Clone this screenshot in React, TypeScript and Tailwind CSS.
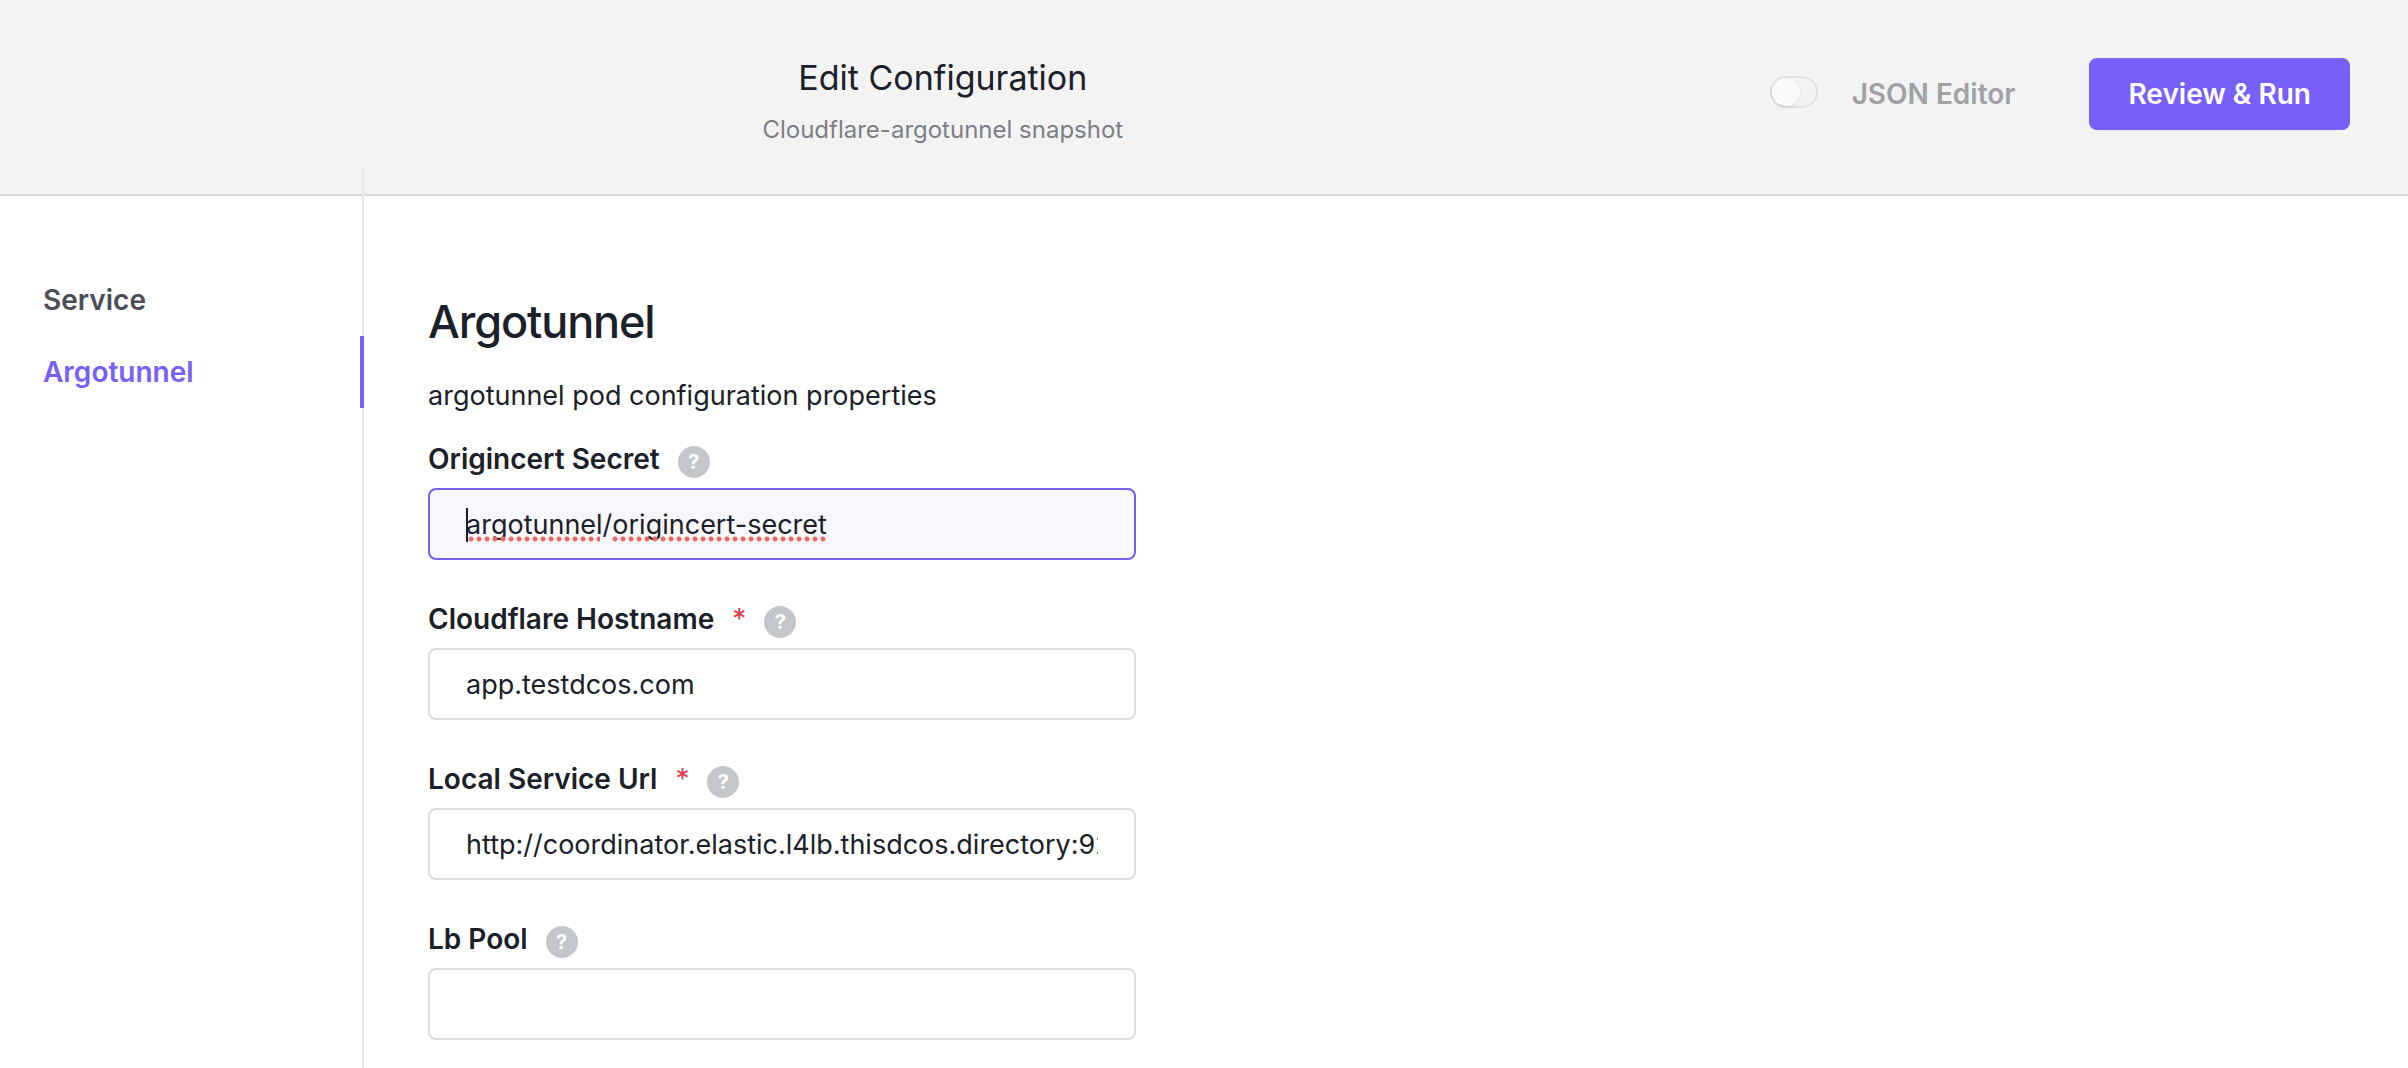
import React from "react";

type Field = {
  id: string;
  label: string;
  value: string;
  required?: boolean;
  active?: boolean;
};

const fields: Field[] = [
  { id: "origincert-secret", label: "Origincert Secret", value: "argotunnel/origincert-secret", active: true },
  { id: "cloudflare-hostname", label: "Cloudflare Hostname", value: "app.testdcos.com", required: true },
  {
    id: "local-service-url",
    label: "Local Service Url",
    value: "http://coordinator.elastic.l4lb.thisdcos.directory:9200",
    required: true,
  },
  { id: "lb-pool", label: "Lb Pool", value: "" },
];

function SpellingMark({ className }: { className: string }) {
  return (
    <span
      className={`absolute top-12 h-1.5 bg-[radial-gradient(circle_at_3px_3px,#ee6a60_0,#ee6a60_2px,transparent_3px)] bg-[length:8px_6px] ${className}`}
    />
  );
}

function FieldRow({ field }: { field: Field }) {
  return (
    <div className="mb-10">
      <div className="flex h-12 items-start">
        <label htmlFor={field.id} className="text-[28px] leading-[38px] font-semibold whitespace-nowrap">
          {field.label}
          {field.required && <span className="ml-[18px] font-normal text-[#dd3c4a]">*</span>}
        </label>
        <button
          type="button"
          aria-label={`Help for ${field.label}`}
          className="mt-1.5 ml-[18px] flex size-8 items-center justify-center rounded-full bg-[#c4c7ca] text-xl leading-8 font-bold text-white"
        >
          ?
        </button>
      </div>
      <div className="relative">
        <input
          id={field.id}
          type="text"
          spellCheck={false}
          defaultValue={field.value}
          className={`block h-[72px] w-full rounded-lg border-2 px-9 text-[27px] outline-none ${
            field.active ? "border-[#7460f6] bg-[#f8f7fd]" : "border-[#dadde2] bg-white"
          }`}
        />
        {field.active && (
          <span aria-hidden="true" className="pointer-events-none">
            <span className="absolute top-5 left-[38px] h-[34px] w-0.5 bg-[#1b2029]" />
            <SpellingMark className="left-10 w-[132px]" />
            <SpellingMark className="left-[184px] w-[216px]" />
          </span>
        )}
      </div>
    </div>
  );
}

export default function App() {
  return (
    <div className="flex h-screen flex-col overflow-hidden bg-white font-[Inter,'Liberation_Sans',sans-serif] text-[#1b2029]">
      <header className="flex h-[196px] shrink-0 items-start border-b-2 border-[#dadada] bg-[#f3f3f3] pr-[58px] pl-[116px]">
        <div className="flex-1 pt-14 text-center">
          <h1 className="text-[34px] leading-11 font-normal">Edit Configuration</h1>
          <p className="mt-3 text-2xl leading-9 text-[#7d7f85]">Cloudflare-argotunnel snapshot</p>
        </div>
        <div className="flex items-start pt-[58px]">
          <label className="flex h-[72px] items-center text-[28px] font-semibold text-[#a0a1a4]">
            <input type="checkbox" role="switch" className="peer sr-only" />
            <span className="mr-[34px] mb-1 flex h-8 w-12 items-center rounded-full border-2 border-[#e0e0e0]">
              <span className="size-7 rounded-full bg-[#f9f9f9] shadow-[0_1px_3px_rgba(0,0,0,0.1)]" />
            </span>
            JSON Editor
          </label>
          <button
            type="button"
            className="ml-[74px] h-[72px] rounded-lg bg-[#7660f8] px-[39px] text-[28px] font-semibold whitespace-nowrap text-white"
          >
            Review &amp; Run
          </button>
        </div>
      </header>
      <div className="flex min-h-0 flex-1">
        <nav className="relative z-10 -mt-7 w-[364px] shrink-0 border-r-2 border-[#e8e8e8] pt-24 text-[28px] font-semibold">
          <a href="#service" className="flex h-[72px] items-center pl-[43px] text-[#4b4e57]">
            Service
          </a>
          <a
            href="#argotunnel"
            aria-current="page"
            className="-mr-0.5 flex h-[72px] items-center border-r-4 border-[#7660f8] pl-[43px] text-[#7660f8]"
          >
            Argotunnel
          </a>
        </nav>
        <main className="ml-16 w-[708px] pt-24">
          <h2 className="text-[45px] leading-[60px] font-medium tracking-tight">Argotunnel</h2>
          <p className="mt-6 text-[27px] leading-10 whitespace-nowrap">argotunnel pod configuration properties</p>
          <div className="mt-6">
            {fields.map((field) => (
              <FieldRow key={field.id} field={field} />
            ))}
          </div>
        </main>
      </div>
    </div>
  );
}
